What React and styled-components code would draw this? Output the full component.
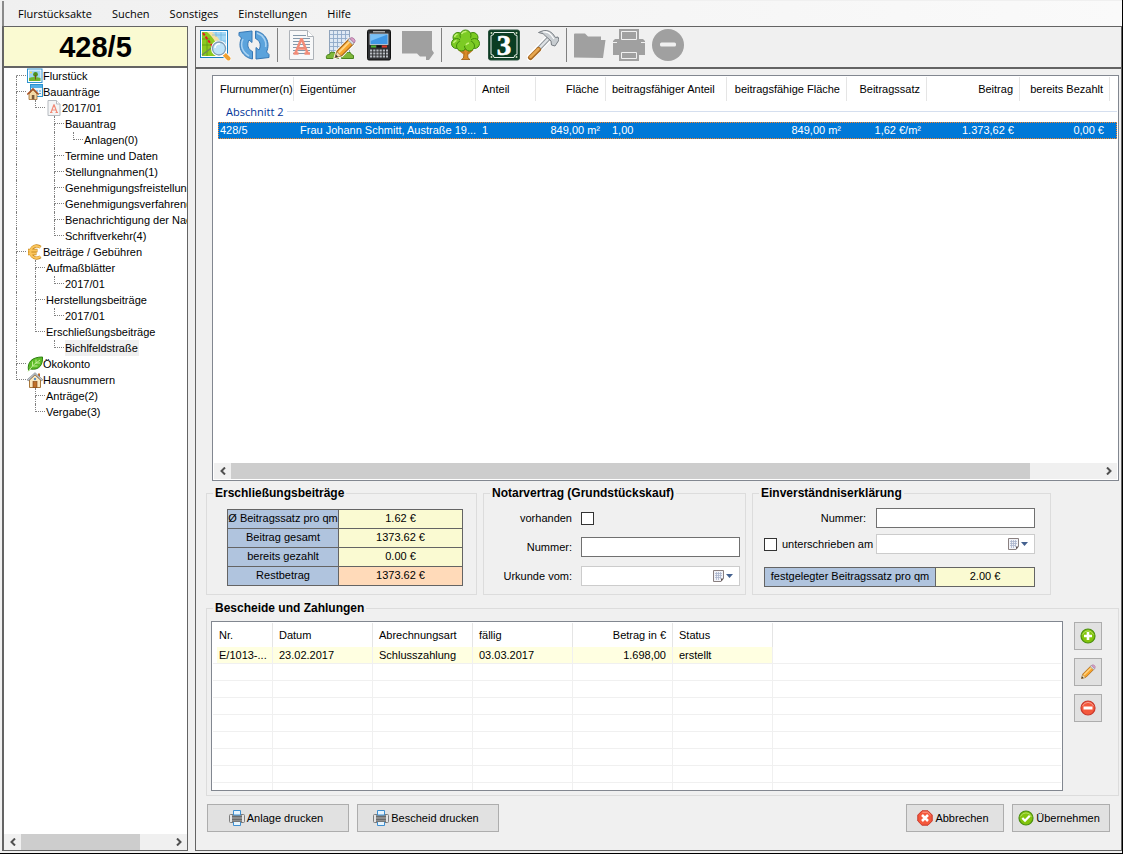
import React, { useState } from 'react';
import styled, { createGlobalStyle } from 'styled-components';

const menuItems = ['Flurstücksakte', 'Suchen', 'Sonstiges', 'Einstellungen', 'Hilfe'];

const tree = [
  { label: 'Flurstück', icon: 'picture' },
  {
    label: 'Bauanträge',
    icon: 'houseForm',
    children: [
      {
        label: '2017/01',
        icon: 'letterSmall',
        children: [
          { label: 'Bauantrag', children: [{ label: 'Anlagen(0)' }] },
          { label: 'Termine und Daten' },
          { label: 'Stellungnahmen(1)' },
          { label: 'Genehmigungsfreistellung' },
          { label: 'Genehmigungsverfahren(1' },
          { label: 'Benachrichtigung der Nac' },
          { label: 'Schriftverkehr(4)' },
        ],
      },
    ],
  },
  {
    label: 'Beiträge / Gebühren',
    icon: 'euro',
    children: [
      { label: 'Aufmaßblätter', children: [{ label: '2017/01' }] },
      { label: 'Herstellungsbeiträge', children: [{ label: '2017/01' }] },
      { label: 'Erschließungsbeiträge', children: [{ label: 'Bichlfeldstraße' }] },
    ],
  },
  { label: 'Ökokonto', icon: 'leaf' },
  {
    label: 'Hausnummern',
    icon: 'house',
    children: [{ label: 'Anträge(2)' }, { label: 'Vergabe(3)' }],
  },
];

const parcelColumns = [
  { title: 'Flurnummer(n)', width: 76 },
  { title: 'Eigentümer', width: 182 },
  { title: 'Anteil', width: 60 },
  { title: 'Fläche', width: 70, right: true },
  { title: 'beitragsfähiger Anteil', width: 121 },
  { title: 'beitragsfähige Fläche', width: 120, right: true },
  { title: 'Beitragssatz', width: 80, right: true },
  { title: 'Beitrag', width: 93, right: true },
  { title: 'bereits Bezahlt', width: 90, right: true },
];

const parcelRow = [
  '428/5',
  'Frau Johann Schmitt, Austraße 19...',
  '1',
  '849,00 m²',
  '1,00',
  '849,00 m²',
  '1,62 €/m²',
  '1.373,62 €',
  '0,00 €',
];

const noticeColumns = [
  { title: 'Nr.', width: 60 },
  { title: 'Datum', width: 100 },
  { title: 'Abrechnungsart', width: 100 },
  { title: 'fällig', width: 100 },
  { title: 'Betrag in €', width: 100, right: true },
  { title: 'Status', width: 100 },
];

const noticeRow = ['E/1013-...', '23.02.2017', 'Schlusszahlung', '03.03.2017', '1.698,00', 'erstellt'];

const emptyRows = [1, 2, 3, 4, 5, 6, 7, 8];

const totals = [
  { label: 'Ø Beitragssatz pro qm', value: '1.62 €' },
  { label: 'Beitrag gesamt', value: '1373.62 €' },
  { label: 'bereits gezahlt', value: '0.00 €' },
  { label: 'Restbetrag', value: '1373.62 €', open: true },
];

const toolbar = [
  ['map', 'Karte'],
  ['refresh', 'Aktualisieren'],
  null,
  ['letter', 'Bauantrag'],
  ['plan', 'Aufmaß'],
  ['calculator', 'Rechner'],
  ['note', 'Notiz', true],
  null,
  ['tree', 'Ökokonto'],
  ['number', 'Hausnummer'],
  ['hammer', 'Erschließung'],
  null,
  ['folder', 'Öffnen', true],
  ['printerOff', 'Drucken', true],
  ['removeOff', 'Löschen', true],
];

const pencil = (
  <>
    <path d="M1.500 14.500l1.300-4.500L11 1.800l3.200 3.200L6 13.200z" fill="#f7a32b" stroke="#a8681c" strokeWidth=".8" />
    <path d="M4 11L11.800 3.200" stroke="#ffd583" strokeWidth="1.400" />
    <path d="M10.300 2.500l1.200-1.200 3.200 3.200-1.200 1.200z" fill="#d5d9e0" stroke="#8c93a0" strokeWidth=".5" />
    <path d="M11.600 1.300q1.400-1.200 2.900.2t.2 3z" fill="#e0a0c8" stroke="#a878a0" strokeWidth=".6" />
    <path d="M1.500 14.500l1.200-4 2.900 2.900z" fill="#f3dcae" stroke="#9b8250" strokeWidth=".4" />
    <path d="M1.500 14.500l.6-2 1.400 1.400z" fill="#333" />
  </>
);

const icons = {
  map: (
    <>
      <rect x="1.500" y="1.500" width="27" height="27" fill="#fff" stroke="#1b7fc0" />
      <rect x="3" y="3" width="24" height="24" fill="#8cc820" />
      <path d="M9 3h18v24h-4C20 17 17 9 9 3z" fill="#a5d8f5" />
      <path d="M8 3h5c7 5 11 12 12 24h-4C19 16 15 9 8 3z" fill="#f6dfa3" />
      <path d="M17 3v5M22 3v24M13 6h14M18 12h9M20 18h7" stroke="#6fb4e0" strokeWidth=".7" />
      <path d="M3 10h8M3 16h12M8 10v17" stroke="#5c9a12" strokeWidth=".8" />
      <path d="M4 4l10 14" stroke="#e02020" strokeWidth="2" strokeDasharray="3 1.500" />
      <path d="M3 26l12-9" stroke="#6f8a50" strokeWidth="1.500" />
      <path d="M24.500 24.500l5 5" stroke="#fff" strokeWidth="5.500" strokeLinecap="round" />
      <path d="M24 24l2 2" stroke="#8a98a8" strokeWidth="2" />
      <path d="M26 26l3.500 3.500" stroke="#f0a030" strokeWidth="4" strokeLinecap="round" />
      <circle cx="20" cy="19.500" r="6.500" fill="#c3e6fa" stroke="#fff" strokeWidth="3" />
      <circle cx="20" cy="19.500" r="6.500" fill="#bfe3f8" stroke="#7f9cb5" strokeWidth="1.300" />
      <path d="M16 19a4 4 0 0 1 5-4" fill="none" stroke="#fff" strokeWidth="1.500" />
    </>
  ),
  refresh: (
    <>
      <g fill="#5ba3dc" stroke="#3577b5" strokeWidth="1" strokeLinejoin="round">
        <path d="M14.500 30C5 28.500-1 19 3.500 9L1 6.500V3.500L14 2v11.500l-3-2.500c-2.500 5-1 9.500 3.500 11.500z" />
        <path d="M17.500 2C27 3.500 33 13 28.500 23l2.500 2.500v3L18 30V18.500l3 2.500c2.500-5 1-9.500-3.500-11.500z" />
      </g>
      <path d="M5 10c-3 6-1 13 6 17M19 4c6 2 10 8 8.500 14" fill="none" stroke="#a9d2f2" strokeWidth="1.500" />
    </>
  ),
  letter: (
    <>
      <path d="M4.500 1.500h18l6 6v23h-24z" fill="#f7f8f9" stroke="#adb2b8" />
      <path d="M22.500 1.500v6h6" fill="#fff" stroke="#adb2b8" />
      <path d="M8 6.500h13M8 9.500h17M8 12.500h17M8 15.500h17M8 18.500h17M8 21.500h17M8 24.500h17" stroke="#8498aa" />
      <path d="M16.500 9.500L10.500 24M16.500 9.500L22.500 24M12.500 19.500h8M8.500 24.500h5M19.500 24.500h5.500" fill="none" stroke="#f28c78" strokeWidth="2.500" />
    </>
  ),
  plan: (
    <>
      <rect x="5.500" y="1.500" width="20" height="25" fill="#dfe9f4" stroke="#8fa3bb" />
      <path d="M9.500 2v24M13.500 2v24M17.500 2v24M21.500 2v24M6 5.500h19M6 9.500h19M6 13.500h19M6 17.500h19M6 21.500h19" stroke="#8ea9c8" strokeWidth=".9" />
      <path d="M2.500 29.500q-1-4 3-4 1-4 4-2 3-1 3 2 3 0 2 4zM17.500 29.500q-1-4 3-4 1-3 4-2 2-1 3 2 3 0 2 4z" fill="#7fb83a" stroke="#4b8420" />
      <g transform="translate(9 7.500) scale(1.450)">
        <path d="M1.500 14.500l1.300-4.500L11 1.800l3.200 3.200L6 13.200z" fill="none" stroke="#fff" strokeWidth="2" />
        {pencil}
      </g>
    </>
  ),
  calculator: (
    <>
      <rect x="4.500" y="1" width="23" height="30" rx="1.500" fill="#2e3033" stroke="#111" />
      <path d="M10 2.800h12" stroke="#ddd" />
      <rect x="7" y="5" width="18" height="10.500" fill="#3f97e5" stroke="#cfd6dd" strokeWidth=".8" />
      <path d="M7.500 5.500h17L7.500 12z" fill="#7ac0f5" />
      <path d="M8 17.500h5" stroke="#4cb52e" strokeWidth="2" />
      <path d="M19 17.500h5" stroke="#e03828" strokeWidth="2" />
      <path d="M14 17.500h4" stroke="#111" strokeWidth="2" />
      <path d="M7 21.500h18M7 24.500h18M7 27.500h18" stroke="#b9bec4" strokeWidth="2" strokeDasharray="2.200 1" />
    </>
  ),
  note: <path d="M0 2h30v19l2 3-5 7h-3v-3.500h-6l-3-3H0z" fill="#a0a0a0" />,
  tree: (
    <>
      <path d="M13 20l2 4-.5 5-2 1.500h8.500L19 29l-.5-5 3-4z" fill="#d98a28" stroke="#9a5a10" strokeWidth=".8" />
      <path d="M15.500 25L10 20.500M18.500 25l5-4.500" stroke="#c47a20" strokeWidth="2.200" />
      <g fill="#7ccb24" stroke="#3f8a0c" strokeWidth="1">
        <circle cx="9" cy="8.500" r="5" />
        <circle cx="24" cy="8.500" r="5" />
        <circle cx="16.500" cy="6.500" r="5.500" />
        <circle cx="7.500" cy="14.500" r="5" />
        <circle cx="25.500" cy="14.500" r="5" />
        <circle cx="12.500" cy="17" r="5" />
        <circle cx="20.500" cy="17" r="5" />
        <circle cx="16.500" cy="11.500" r="5.500" stroke="none" />
      </g>
      <path d="M12.500 5a5 5 0 0 1 5-2.500M5.500 8a4 4 0 0 1 3-3M4.500 14a4 4 0 0 1 3-2.500M17 16a4 4 0 0 1 3-2" fill="none" stroke="#c4f078" strokeWidth="1.500" />
    </>
  ),
  number: (
    <>
      <rect x=".5" y="1" width="31" height="30" rx="2" fill="#0a3d22" stroke="#2d5240" />
      <path d="M6 3.500h20a3 3 0 0 0 3 3v19a3 3 0 0 0-3 3H6a3 3 0 0 0-3-3v-19a3 3 0 0 0 3-3z" fill="none" stroke="#e8efe9" strokeWidth="1" />
      <circle cx="3.500" cy="4" r="1" fill="#cdb" />
      <circle cx="28.500" cy="4" r="1" fill="#cdb" />
      <circle cx="3.500" cy="28" r="1" fill="#cdb" />
      <circle cx="28.500" cy="28" r="1" fill="#cdb" />
      <text x="16" y="26" textAnchor="middle" fontFamily="Liberation Serif, serif" fontWeight="700" fontSize="29" fill="#fff" stroke="#fff" strokeWidth=".6">3</text>
    </>
  ),
  hammer: (
    <>
      <path d="M3 28.500L21 10" stroke="#fff" strokeWidth="7" strokeLinecap="round" />
      <path d="M11 20.500L21.500 9.500" stroke="#8e9499" strokeWidth="4.500" />
      <path d="M11 20.500L21.500 9.500" stroke="#dfe3e6" strokeWidth="2.500" />
      <path d="M3.500 28.500l8-8" stroke="#a86820" strokeWidth="5" strokeLinecap="round" />
      <path d="M3.500 28l8-8" stroke="#e8a850" strokeWidth="2.500" strokeLinecap="round" />
      <path d="M11.500 3.500Q20-1 25.500 4.500l3 4 2.500-.5 1 3-4 6-3.500-1-.5-4-5-4.500Q17 4 11.500 3.500z" fill="#c8cdd1" stroke="#777d83" />
      <path d="M16 3q5-1 8 3l3 4" fill="none" stroke="#fff" strokeWidth="1.200" />
    </>
  ),
  folder: <path d="M0 5.500q0-1 1-1h10l3 3h13v3.500h4.500L29 29 0 28.500z" fill="#a0a0a0" />,
  printerOff: (
    <>
      <path d="M6 0h20v10h4l2 2v14h-6v6H6v-6H0V12l2-2h4z" fill="#a0a0a0" />
      <path d="M8.500 10.500v-8h15v8zM0 13.500h4M28 13.500h4M8.500 23.500h15v6h-15z" fill="none" stroke="#f0f0f0" />
    </>
  ),
  removeOff: (
    <>
      <circle cx="16" cy="16" r="16" fill="#a0a0a0" />
      <rect x="8" y="13.500" width="16" height="4" rx="1.500" fill="#f0f0f0" />
    </>
  ),
  picture: (
    <>
      <rect x=".5" y="1" width="14.500" height="13.500" fill="#fff" stroke="#2f93cf" />
      <rect x="2" y="2.500" width="11.500" height="10.500" fill="#9ed4f5" />
      <path d="M2 10q5-2 11.500 0v3H2z" fill="#6fb52c" />
      <circle cx="8.500" cy="6.500" r="2.400" fill="#4d8f1c" />
      <path d="M8.500 7v4.500" stroke="#7a4a1a" />
      <circle cx="4" cy="4.500" r="1" fill="#ffe14d" />
    </>
  ),
  houseForm: (
    <>
      <rect x="3.500" y=".5" width="12" height="12" fill="#eaf6fd" stroke="#2f93cf" />
      <path d="M4 2.500h11" stroke="#52b0e6" strokeWidth="3" />
      <path d="M9 7h2M12 7h2M9 9.500h2M12 9.500h2" stroke="#4aa0d8" />
      <path d="M2 10l4-4 4 4v5.500H2z" fill="#f4d9a4" stroke="#a06a30" strokeWidth=".8" />
      <path d="M.3 10.500L6 4.800l5.700 5.700" fill="none" stroke="#a84f20" strokeWidth="1.400" />
      <rect x="4.800" y="11" width="2.600" height="4.300" fill="#7a5a3a" />
    </>
  ),
  letterSmall: (
    <>
      <path d="M2 .5h8.500L14 4v11.500H2z" fill="#f4f5f6" stroke="#b6bbc0" />
      <path d="M10.500.5V4H14" fill="#fff" stroke="#b6bbc0" />
      <path d="M8 4.500L5 12.500M8 4.500l3 8M6 10h4M4 12.500h2.500M9.500 12.500H12" fill="none" stroke="#f28c78" strokeWidth="1.200" />
    </>
  ),
  euro: (
    <>
      <path d="M13.500 3.300A6 6 0 1 0 13.500 12.700M1 6.500h9.500M1 9.500h8.500" fill="none" stroke="#c98a20" strokeWidth="3.300" />
      <path d="M13.300 3.500A6 6 0 1 0 13.300 12.500M1.400 6.500h8.700M1.400 9.500h7.700" fill="none" stroke="#fbc55c" strokeWidth="2" />
    </>
  ),
  leaf: (
    <>
      <path d="M1.500 14.500C0 6 5 1 15.500 1 16 9 12 14.500 3.500 13z" fill="#5cbc28" stroke="#2f7f12" />
      <path d="M1 15.500Q6 8 13 4M5.500 10V5.500M5.500 10h5M9 7V3.500M9 7h4" fill="none" stroke="#c9f0a0" strokeWidth=".9" />
    </>
  ),
  house: (
    <>
      <path d="M2.500 8L8 3l5.500 5v7.500h-11z" fill="#fbe9c0" stroke="#a8773a" />
      <rect x="11" y="1.500" width="2" height="4" fill="#b86a30" />
      <path d="M.5 8.500L8 1.500l7.500 7" fill="none" stroke="#8a9098" strokeWidth="2" />
      <path d="M1 8L8 1.500 15 8" fill="none" stroke="#d8dce0" strokeWidth=".8" />
      <rect x="6" y="9.500" width="4" height="6" fill="#c07028" stroke="#7a4010" strokeWidth=".6" />
      <circle cx="8" cy="7" r="1.200" fill="#5a90c8" />
    </>
  ),
  printer: (
    <>
      <rect x=".5" y="4.500" width="15" height="8" rx="1" fill="#e4e4e4" stroke="#7d7d7d" />
      <rect x="3" y="5" width="10" height="7" fill="#8e8e8e" />
      <path d="M3 6.500h10M3 9.500h10" stroke="#6a6a6a" />
      <path d="M4.500 5V.5h7V5z" fill="#e6f4fd" stroke="#3f8fd0" />
      <path d="M4.500 11.500h7v4h-7z" fill="#e6f4fd" stroke="#3f8fd0" />
      <path d="M3 11.500h10" stroke="#777" />
    </>
  ),
  add: (
    <>
      <circle cx="8" cy="8" r="7" fill="#83c40c" stroke="#4b8f10" strokeWidth="1.200" />
      <path d="M2.500 6.500a6 6 0 0 1 11 0" fill="none" stroke="#b4e060" />
      <path d="M8 4v8M4 8h8" stroke="#fff" strokeWidth="2.600" />
    </>
  ),
  edit: pencil,
  remove: (
    <>
      <circle cx="8" cy="8" r="7" fill="#f4583c" stroke="#c8382c" strokeWidth="1.200" />
      <path d="M2.500 6a6 6 0 0 1 11 0" fill="none" stroke="#fba090" />
      <rect x="3.500" y="6.500" width="9" height="3" fill="#fff" />
    </>
  ),
  cancel: (
    <>
      <path d="M5 .8h6L15.200 5v6L11 15.200H5L.8 11V5z" fill="#f4583c" stroke="#c8382c" />
      <path d="M5.400 2.200h5.200L13.500 5" fill="none" stroke="#fba090" />
      <path d="M5 5l6 6M11 5l-6 6" stroke="#fff" strokeWidth="2.500" />
    </>
  ),
  accept: (
    <>
      <circle cx="8" cy="8" r="7" fill="#83c40c" stroke="#4b8f10" strokeWidth="1.200" />
      <path d="M2.500 6.500a6 6 0 0 1 11 0" fill="none" stroke="#b4e060" />
      <path d="M4.300 8l2.700 2.700 4.800-5" fill="none" stroke="#fff" strokeWidth="2.300" />
    </>
  ),
};

const bigIcons = [
  'map', 'refresh', 'letter', 'plan', 'calculator', 'note', 'tree',
  'number', 'hammer', 'folder', 'printerOff', 'removeOff',
];

const Icon = ({ name }) => {
  const size = bigIcons.includes(name) ? 32 : 16;
  return (
    <Svg width={size} height={size} viewBox={`0 0 ${size} ${size}`} aria-hidden="true">
      {icons[name]}
    </Svg>
  );
};

const TreeNode = ({ node, trail, first, last, selected, onSelect }) => (
  <>
    <TreeRow>
      {trail.map((line, i) => (
        <Guide key={i} $line={line} />
      ))}
      <Connector>
        <ConnectorTop $line={!first} />
        <ConnectorBottom $line={!last} />
      </Connector>
      {node.icon && <Icon name={node.icon} />}
      <TreeLabel
        type="button"
        $selected={selected === node.label}
        onClick={() => onSelect(node.label)}
      >
        {node.label}
      </TreeLabel>
    </TreeRow>
    {(node.children || []).map((child, i) => (
      <TreeNode
        key={i}
        node={child}
        trail={[...trail, !last]}
        last={i === node.children.length - 1}
        selected={selected}
        onSelect={onSelect}
      />
    ))}
  </>
);

const Scrollbar = ({ thumb }) => (
  <ScrollTrack>
    <ScrollArrow type="button" aria-label="Nach links">
      <svg width="8" height="8" viewBox="0 0 8 8">
        <path d="M6 .5L2.500 4 6 7.500" fill="none" stroke="#505050" strokeWidth="2" />
      </svg>
    </ScrollArrow>
    <ScrollRail>
      <ScrollThumb $size={thumb} />
    </ScrollRail>
    <ScrollArrow type="button" aria-label="Nach rechts">
      <svg width="8" height="8" viewBox="0 0 8 8">
        <path d="M2 .5L5.500 4 2 7.500" fill="none" stroke="#505050" strokeWidth="2" />
      </svg>
    </ScrollArrow>
  </ScrollTrack>
);

const DateField = ({ id, label }) => (
  <DateBox>
    <DateInput id={id} type="text" aria-label={label} />
    <DateButton type="button" aria-label="Kalender öffnen">
      <svg width="22" height="14" viewBox="0 0 22 14">
        <path d="M1.500 1.500h10v8l-2.500 3H1.500z" fill="#f2f3f8" stroke="#8a8080" />
        <path d="M11.500 9.500H9v3z" fill="#5c5252" />
        <path d="M3 4.500h7M3 6.500h7M3 8.500h6M4.500 3v8M6.500 3v8M8.500 3v7" stroke="#a9b4cc" strokeWidth=".8" />
        <path d="M14 5h7l-3.500 4z" fill="#44618f" />
      </svg>
    </DateButton>
  </DateBox>
);

const App = () => {
  const [selected, setSelected] = useState('Bichlfeldstraße');

  return (
    <>
      <GlobalStyle />
      <Window>
        <MenuBar>
          {menuItems.map(item => (
            <MenuItem key={item} type="button">{item}</MenuItem>
          ))}
        </MenuBar>
        <Body>
          <Sidebar>
            <ParcelTitle>428/5</ParcelTitle>
            <Tree>
              {tree.map((node, i) => (
                <TreeNode
                  key={node.label}
                  node={node}
                  trail={[]}
                  first={i === 0}
                  last={i === tree.length - 1}
                  selected={selected}
                  onSelect={setSelected}
                />
              ))}
            </Tree>
            <Scrollbar thumb={80} />
          </Sidebar>

          <Main>
            <Toolbar>
              {toolbar.map((tool, i) =>
                tool ? (
                  <ToolButton key={i} type="button" aria-label={tool[1]} disabled={tool[2]}>
                    <Icon name={tool[0]} />
                  </ToolButton>
                ) : (
                  <ToolDivider key={i} />
                )
              )}
            </Toolbar>

            <Content>
              <ParcelList>
                <ParcelScroll>
                  <Table>
                    <colgroup>
                      {parcelColumns.map(col => (
                        <Col key={col.title} $width={col.width} />
                      ))}
                      <col />
                    </colgroup>
                    <thead>
                      <tr>
                        {parcelColumns.map(col => (
                          <HeadCell key={col.title} $right={col.right}>{col.title}</HeadCell>
                        ))}
                        <td />
                      </tr>
                    </thead>
                    <tbody>
                      <tr>
                        <GroupCell colSpan={10}>
                          <GroupTitle>Abschnitt 2</GroupTitle>
                        </GroupCell>
                      </tr>
                      <SelectedRow>
                        {parcelRow.map((value, i) => (
                          <Cell key={i} $right={parcelColumns[i].right}>{value}</Cell>
                        ))}
                        <td />
                      </SelectedRow>
                    </tbody>
                  </Table>
                </ParcelScroll>
                <Scrollbar thumb={92} />
              </ParcelList>

              <Boxes>
                <Box $width={271}>
                  <Legend>Erschließungsbeiträge</Legend>
                  <TotalsBody>
                    <SumTable>
                      <tbody>
                        {totals.map(row => (
                          <tr key={row.label}>
                            <SumLabel $width={111}>{row.label}</SumLabel>
                            <SumValue $open={row.open}>{row.value}</SumValue>
                          </tr>
                        ))}
                      </tbody>
                    </SumTable>
                  </TotalsBody>
                </Box>

                <Box $width={263}>
                  <Legend>Notarvertrag (Grundstückskauf)</Legend>
                  <NotaryForm>
                    <label htmlFor="vorhanden">vorhanden</label>
                    <Checkbox id="vorhanden" type="checkbox" />
                    <label htmlFor="notarNummer">Nummer:</label>
                    <TextInput id="notarNummer" type="text" />
                    <label htmlFor="urkunde">Urkunde vom:</label>
                    <DateField id="urkunde" />
                  </NotaryForm>
                </Box>

                <Box $width={299}>
                  <Legend>Einverständniserklärung</Legend>
                  <ConsentBody>
                    <ConsentForm>
                      <NumberLabel htmlFor="erklaerungNummer">Nummer:</NumberLabel>
                      <TextInput id="erklaerungNummer" type="text" />
                      <CheckLabel>
                        <Checkbox type="checkbox" />
                        unterschrieben am
                      </CheckLabel>
                      <DateField id="unterschrieben" label="unterschrieben am" />
                    </ConsentForm>
                    <SumTable>
                      <tbody>
                        <tr>
                          <SumLabel $width={171}>festgelegter Beitragssatz pro qm</SumLabel>
                          <SumValue>2.00 €</SumValue>
                        </tr>
                      </tbody>
                    </SumTable>
                  </ConsentBody>
                </Box>
              </Boxes>

              <NoticeBox>
                <Legend>Bescheide und Zahlungen</Legend>
                <NoticeLayout>
                  <NoticeList>
                    <Table>
                      <colgroup>
                        {noticeColumns.map(col => (
                          <Col key={col.title} $width={col.width} />
                        ))}
                        <col />
                      </colgroup>
                      <thead>
                        <tr>
                          {noticeColumns.map(col => (
                            <NoticeHead key={col.title} $right={col.right}>{col.title}</NoticeHead>
                          ))}
                          <td />
                        </tr>
                      </thead>
                      <tbody>
                        <tr>
                          {noticeRow.map((value, i) => (
                            <NoticeCell key={i} $filled $right={noticeColumns[i].right}>{value}</NoticeCell>
                          ))}
                          <NoticeCell />
                        </tr>
                        {emptyRows.map(row => (
                          <tr key={row}>
                            {noticeColumns.map(col => (
                              <NoticeCell key={col.title} />
                            ))}
                            <NoticeCell />
                          </tr>
                        ))}
                      </tbody>
                    </Table>
                  </NoticeList>
                  <SideButtons>
                    <SquareButton type="button" aria-label="Hinzufügen"><Icon name="add" /></SquareButton>
                    <SquareButton type="button" aria-label="Bearbeiten"><Icon name="edit" /></SquareButton>
                    <SquareButton type="button" aria-label="Entfernen"><Icon name="remove" /></SquareButton>
                  </SideButtons>
                </NoticeLayout>
              </NoticeBox>

              <Footer>
                <Button type="button" $width={142}><Icon name="printer" />Anlage drucken</Button>
                <Button type="button" $width={142}><Icon name="printer" />Bescheid drucken</Button>
                <Spacer />
                <Button type="button" $width={98}><Icon name="cancel" />Abbrechen</Button>
                <Button type="button" $width={98}><Icon name="accept" />Übernehmen</Button>
              </Footer>
            </Content>
          </Main>
        </Body>
      </Window>
    </>
  );
};

const GlobalStyle = createGlobalStyle`
  * {
    box-sizing: border-box;
  }
  body {
    margin: 0;
    background: #f0f0f0;
    color: #000;
    font-family: 'Liberation Sans', Arial, sans-serif;
    font-size: 11px;
    line-height: 13px;
  }
  button, input {
    font: inherit;
    color: inherit;
    border-radius: 0;
  }
`;

const Svg = styled.svg`
  display: block;
  flex: none;
`;

const Window = styled.div`
  display: flex;
  flex-direction: column;
  min-height: 100vh;
  padding: 1px 0 2px 2px;
  border-right: 1px solid #000;
  border-bottom: 1px solid #000;
`;

const MenuBar = styled.nav`
  display: flex;
  height: 25px;
  padding-left: 4px;
  border-left: 2px solid #8a8a8a;
  background: linear-gradient(to right, #f0f0f0, #fafafa);
`;

const MenuItem = styled.button`
  padding: 0 10px;
  border: none;
  background: none;
  font-family: 'Open Sans', sans-serif;
  font-size: 11px;
`;

const Body = styled.div`
  display: flex;
  flex: 1;
  gap: 7px;
  border-left: 2px solid #646464;
`;

const Sidebar = styled.aside`
  display: flex;
  flex-direction: column;
  flex: none;
  width: 184px;
  border: 1px solid #646464;
  border-left: none;
  background: #fff;
`;

const ParcelTitle = styled.h1`
  margin: 0;
  height: 41px;
  border-bottom: 2px solid #646464;
  background: #fafad2;
  font-size: 29px;
  line-height: 40px;
  text-align: center;
`;

const Tree = styled.div`
  flex: 1;
  padding-left: 12px;
  overflow: hidden;
`;

const TreeRow = styled.div`
  display: flex;
  height: 16px;
`;

const Guide = styled.span`
  flex: none;
  width: 19px;
  border-left: 1px ${props => (props.$line ? 'dotted #808080' : 'solid transparent')};
`;

const Connector = styled.span`
  display: grid;
  grid-template-rows: 8px 8px;
  flex: none;
  width: 11px;
  padding-right: 1px;
`;

const ConnectorTop = styled.span`
  border-left: 1px ${props => (props.$line ? 'dotted #808080' : 'solid transparent')};
  border-bottom: 1px dotted #808080;
`;

const ConnectorBottom = styled.span`
  border-left: 1px ${props => (props.$line ? 'dotted #808080' : 'solid transparent')};
`;

const TreeLabel = styled.button`
  padding: 0 1px 0 0;
  border: none;
  background: ${props => (props.$selected ? '#f0f0f0' : 'none')};
  line-height: 16px;
  white-space: nowrap;
`;

const ScrollTrack = styled.div`
  display: flex;
  flex: none;
  height: 16px;
  background: #f0f0f0;
`;

const ScrollArrow = styled.button`
  display: flex;
  align-items: center;
  justify-content: center;
  flex: none;
  width: 17px;
  padding: 0;
  border: none;
  background: none;
`;

const ScrollRail = styled.div`
  flex: 1;
`;

const ScrollThumb = styled.div`
  width: ${props => props.$size}%;
  height: 100%;
  background: #cdcdcd;
`;

const Main = styled.main`
  display: flex;
  flex-direction: column;
  flex: 1;
  min-width: 0;
  border: 1px solid #646464;
`;

const Toolbar = styled.div`
  display: flex;
  align-items: center;
  gap: 7px;
  height: 42px;
  padding: 0 3px 4px;
  border-bottom: 2px solid #646464;
`;

const ToolButton = styled.button`
  padding: 0;
  border: none;
  background: none;
`;

const ToolDivider = styled.span`
  width: 1px;
  height: 34px;
  background: #808080;
`;

const Content = styled.div`
  display: flex;
  flex-direction: column;
  flex: 1;
  padding: 6px 2px 18px 10px;
`;

const ParcelList = styled.div`
  display: flex;
  flex-direction: column;
  flex: 1;
  margin-left: 6px;
  padding: 1px;
  border: 1px solid #828790;
  background: #fff;
`;

const ParcelScroll = styled.div`
  flex: 1;
  padding-left: 4px;
  overflow: hidden;
`;

const Table = styled.table`
  width: 100%;
  border-spacing: 0;
  table-layout: fixed;
  td {
    padding: 0;
  }
`;

const Col = styled.col`
  width: ${props => props.$width}px;
`;

const HeadCell = styled.th`
  height: 24px;
  padding: 0 6px;
  border-right: 1px solid #e5e5e5;
  font-weight: 400;
  text-align: ${props => (props.$right ? 'right' : 'left')};
  white-space: nowrap;
  &:first-child {
    padding: 0 0 0 2px;
  }
`;

const GroupCell = styled.td`
  height: 21px;
`;

const GroupTitle = styled.div`
  display: flex;
  align-items: center;
  gap: 4px;
  padding-left: 8px;
  color: #003399;
  font-family: 'Open Sans', sans-serif;
  &::after {
    content: '';
    flex: 1;
    height: 1px;
    background: #d5dfef;
  }
`;

const SelectedRow = styled.tr`
  background: #0078d7;
  color: #fff;
  outline: 1px dotted #ff8728;
  outline-offset: -1px;
`;

const Cell = styled.td`
  && {
    height: 17px;
    padding: 0 ${props => (props.$right ? 6 : 0)}px 0 6px;
    text-align: ${props => (props.$right ? 'right' : 'left')};
    white-space: nowrap;
  }
  &&:first-child {
    padding-left: 2px;
  }
`;

const Boxes = styled.div`
  display: flex;
  align-items: stretch;
  gap: 6px;
  margin-top: 6px;
`;

const Box = styled.fieldset`
  width: ${props => props.$width}px;
  min-width: 0;
  margin: 0;
  padding: 0;
  border: 1px solid #dcdcdc;
`;

const NoticeBox = styled(Box)`
  width: auto;
  margin-top: 7px;
`;

const Legend = styled.legend`
  margin-left: 6px;
  padding: 0 2px;
  font-size: 12px;
  font-weight: 700;
`;

const TotalsBody = styled.div`
  padding: 9px 13px 8px 20px;
`;

const SumTable = styled.table`
  width: 100%;
  border-collapse: collapse;
  table-layout: fixed;
`;

const SumLabel = styled.th`
  width: ${props => props.$width}px;
  height: 19px;
  padding: 0 0 1px;
  border: 1px solid #646464;
  background: #b0c4de;
  font-weight: 400;
  white-space: nowrap;
`;

const SumValue = styled.td`
  padding: 0 0 1px;
  border: 1px solid #646464;
  background: ${props => (props.$open ? '#ffdab9' : '#fafad2')};
  text-align: center;
`;

const NotaryForm = styled.div`
  display: grid;
  grid-template-columns: 1fr 159px;
  grid-auto-rows: 20px;
  align-items: center;
  gap: 9px;
  padding: 8px 5px 8px 0;
  text-align: right;
`;

const ConsentBody = styled.div`
  padding: 8px 15px 7px 11px;
`;

const ConsentForm = styled.div`
  display: grid;
  grid-template-columns: minmax(0, 1fr) 159px;
  grid-auto-rows: 20px;
  align-items: center;
  gap: 6px 1px;
  margin-bottom: 13px;
`;

const NumberLabel = styled.label`
  padding-right: 9px;
  text-align: right;
`;

const CheckLabel = styled.label`
  display: flex;
  align-items: center;
  gap: 5px;
  white-space: nowrap;
`;

const Checkbox = styled.input`
  appearance: none;
  flex: none;
  width: 13px;
  height: 13px;
  margin: 0;
  border: 1px solid #333;
  background: #fff;
  &:checked {
    box-shadow: inset 0 0 0 2px #fff;
    background: #333;
  }
`;

const TextInput = styled.input`
  width: 100%;
  height: 20px;
  padding: 0 3px;
  border: 1px solid #707070;
  background: #fff;
`;

const DateBox = styled.div`
  display: flex;
  height: 20px;
  border: 1px solid #ccc;
  background: #fff;
`;

const DateInput = styled.input`
  flex: 1;
  min-width: 0;
  padding: 0 3px;
  border: none;
  outline: none;
  background: none;
`;

const DateButton = styled.button`
  display: flex;
  align-items: center;
  padding: 0 5px 0 0;
  border: none;
  background: none;
`;

const NoticeLayout = styled.div`
  display: flex;
  gap: 11px;
  padding: 6px 16px 4px 4px;
`;

const NoticeList = styled.div`
  flex: 1;
  height: 170px;
  padding: 1px;
  border: 1px solid #828790;
  background: #fff;
  overflow: hidden;
`;

const NoticeHead = styled(HeadCell)`
  &:first-child {
    padding: 0 6px;
  }
`;

const NoticeCell = styled(Cell)`
  && {
    border-right: 1px solid #f0f0f0;
    border-bottom: 1px solid #f0f0f0;
    background: ${props => (props.$filled ? '#ffffe1' : '#fff')};
  }
  &&:first-child {
    padding-left: 6px;
    background: ${props =>
      props.$filled ? 'linear-gradient(to right, #fff 4px, #ffffe1 4px)' : '#fff'};
  }
  &&:last-child {
    border-right: none;
    background: #fff;
  }
`;

const SideButtons = styled.div`
  display: flex;
  flex-direction: column;
  gap: 8px;
  padding-top: 1px;
`;

const Button = styled.button`
  display: flex;
  align-items: center;
  justify-content: center;
  gap: 2px;
  width: ${props => props.$width}px;
  height: 28px;
  padding: 0 4px 0 0;
  border: 1px solid #adadad;
  background: #e1e1e1;
  white-space: nowrap;
`;

const SquareButton = styled(Button)`
  width: 28px;
  padding: 0;
`;

const Footer = styled.div`
  display: flex;
  gap: 8px;
  margin-top: 8px;
  padding: 0 9px 0 1px;
`;

const Spacer = styled.div`
  flex: 1;
`;

export default App;
